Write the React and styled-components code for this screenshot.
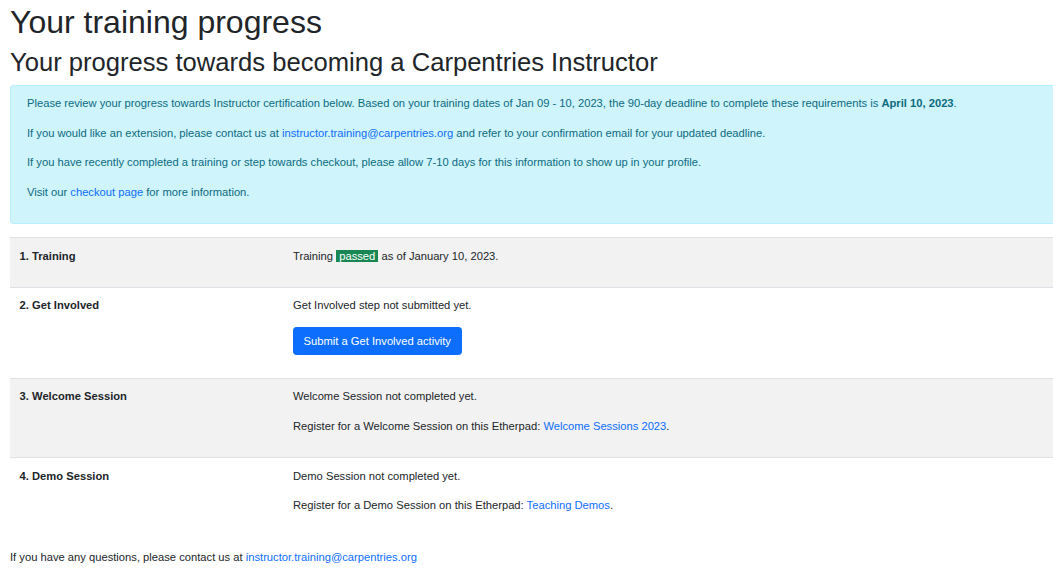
import React from "react";
import styled, { createGlobalStyle } from "styled-components";

const GlobalStyle = createGlobalStyle`
  html {
    font-size: 12.8px;
    overflow-x: hidden;
  }
  body {
    margin: 0;
    overflow-x: hidden;
    font-family: "Liberation Sans", Arial, sans-serif;
    font-size: 0.875rem;
    line-height: 1.5;
    color: #212529;
    background: #fff;
  }
  * {
    box-sizing: border-box;
  }
`;

const App = () => {
  const steps = [
    {
      title: "1. Training",
      body: (
        <P>
          Training <Passed> passed </Passed> as of January 10, 2023.
        </P>
      ),
    },
    {
      title: "2. Get Involved",
      body: (
        <>
          <P>Get Involved step not submitted yet.</P>
          <P>
            <Button>Submit a Get Involved activity</Button>
          </P>
        </>
      ),
    },
    {
      title: "3. Welcome Session",
      body: (
        <>
          <P>Welcome Session not completed yet.</P>
          <P>
            Register for a Welcome Session on this Etherpad:{" "}
            <Link href="#">Welcome Sessions 2023</Link>.
          </P>
        </>
      ),
    },
    {
      title: "4. Demo Session",
      body: (
        <>
          <P>Demo Session not completed yet.</P>
          <P>
            Register for a Demo Session on this Etherpad:{" "}
            <Link href="#">Teaching Demos</Link>.
          </P>
        </>
      ),
    },
  ];

  return (
    <Page>
      <GlobalStyle />
      <H1>Your training progress</H1>
      <H2>Your progress towards becoming a Carpentries Instructor</H2>
      <Alert>
        <P>
          Please review your progress towards Instructor certification below.
          Based on your training dates of Jan 09 - 10, 2023, the 90-day deadline
          to complete these requirements is <strong>April 10, 2023</strong>.
        </P>
        <P>
          If you would like an extension, please contact us at{" "}
          <Link href="#">instructor.training@carpentries.org</Link> and refer to
          your confirmation email for your updated deadline.
        </P>
        <P>
          If you have recently completed a training or step towards checkout,
          please allow 7-10 days for this information to show up in your
          profile.
        </P>
        <P>
          Visit our <Link href="#">checkout page</Link> for more information.
        </P>
      </Alert>
      <Table>
        {steps.map((step, i) => (
          <Row key={step.title} $striped={i % 2 === 0}>
            <HeadCell>{step.title}</HeadCell>
            <Cell>{step.body}</Cell>
          </Row>
        ))}
      </Table>
      <P>
        If you have any questions, please contact us at{" "}
        <Link href="#">instructor.training@carpentries.org</Link>
      </P>
    </Page>
  );
};

export default App;

const Page = styled.div`
  width: 1060px;
  padding: 2.7px 0 0 10px;
`;

const H1 = styled.h1`
  margin: 0 0 0.5rem;
  font-size: 2.5rem;
  font-weight: 500;
  line-height: 1.2;
`;

const H2 = styled.h2`
  margin: 0 0 0.5rem;
  font-size: 2rem;
  font-weight: 500;
  line-height: 1.2;
`;

const P = styled.p`
  margin: 0 0 1rem;
`;

const Link = styled.a`
  color: #0d6efd;
  text-decoration: none;
`;

const Alert = styled.div`
  padding: 0.75rem 1.25rem;
  margin-bottom: 1rem;
  background: #cff4fc;
  border: 1px solid #b6effb;
  border-radius: 0.25rem;
  color: #0c6b80;

  strong {
    font-weight: 700;
  }
`;

const Table = styled.div`
  margin-bottom: 1rem;
`;

const Row = styled.div`
  display: grid;
  grid-template-columns: 273.4px 1fr;
  border-top: 1px solid #dee2e6;
  background: ${(p) => (p.$striped ? "#f2f2f2" : "transparent")};
`;

const HeadCell = styled.div`
  padding: 0.75rem;
  font-weight: 700;
`;

const Cell = styled.div`
  padding: 0.75rem;
`;

const Passed = styled.span`
  background: #198754;
  color: #fff;
  white-space: pre;
`;

const Button = styled.button`
  display: inline-block;
  padding: 0.375rem 0.75rem;
  font-family: inherit;
  font-size: 0.875rem;
  line-height: 1.5;
  color: #fff;
  background: #0d6efd;
  border: 1px solid #0d6efd;
  border-radius: 0.25rem;
  cursor: pointer;
`;
